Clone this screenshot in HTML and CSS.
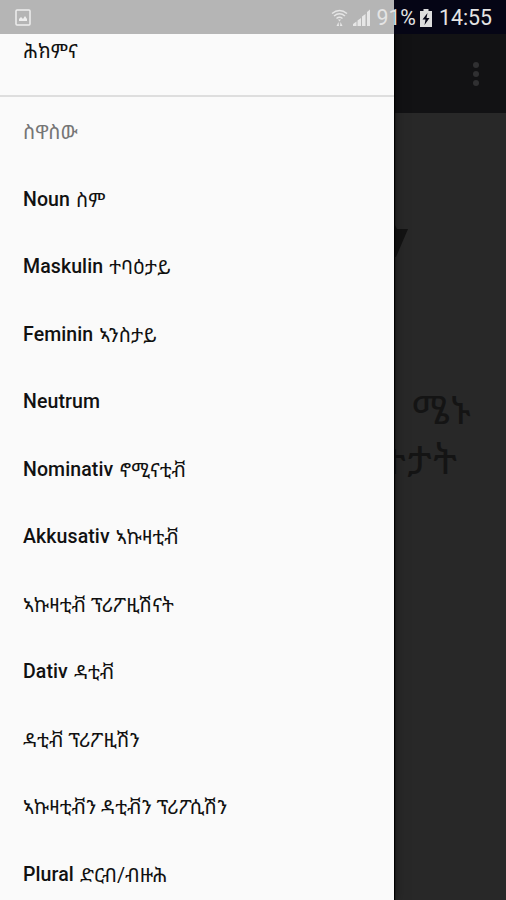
FILE: index.html
```html
<!DOCTYPE html>
<html lang="ti">
<head>
  <meta charset="UTF-8" />
  <title>ስዋስው</title>
  <link rel="stylesheet" href="styles.css">
</head>
<body>

  <!-- Main screen, dimmed behind the drawer -->
  <div class="screen">
    <header class="toolbar">
      <div class="overflow"><i></i><i></i><i></i></div>
    </header>
    <main class="content">
      <svg class="arrow" width="14" height="38" viewBox="0 0 14 38"><path d="M0 2L3 8H14L2 36H0z" fill="#131313"/></svg>
      <p class="hint first">ሜኑ</p>
      <p class="hint second">ትታት</p>
    </main>
  </div>

  <!-- Navigation drawer -->
  <nav class="drawer">
    <div class="item cut"><b>ሕክምና</b></div>
    <div class="section"><b>ስዋስው</b></div>
    <div class="item">Noun <b>ስም</b></div>
    <div class="item">Maskulin <b>ተባዕታይ</b></div>
    <div class="item">Feminin <b>ኣንስታይ</b></div>
    <div class="item">Neutrum</div>
    <div class="item">Nominativ <b>ኖሚናቲቭ</b></div>
    <div class="item">Akkusativ <b>ኣኩዛቲቭ</b></div>
    <div class="item"><b>ኣኩዛቲቭ ፕሪፖዚሽናት</b></div>
    <div class="item">Dativ <b>ዳቲቭ</b></div>
    <div class="item"><b>ዳቲቭ ፕሪፖዚሽን</b></div>
    <div class="item"><b>ኣኩዛቲቭን ዳቲቭን ፕሪፖሲሽን</b></div>
    <div class="item">Plural <b>ድርብ/ብዙሕ</b></div>
  </nav>

  <!-- Status bar -->
  <div class="status">
    <svg class="picture" width="16" height="17" viewBox="0 0 16 17"><rect x="1" y="1" width="14" height="15" rx="1" fill="none" stroke="#eee" stroke-width="1.5"/><path d="M4 12V10L6 8L8 10L10 7L12 10V12z" fill="#eee"/></svg>
    <svg class="wifi" width="17" height="18" viewBox="0 0 17 18"><g fill="none" stroke="#e6e6e6" stroke-width="1.5"><path d="M1 4.5Q8.500-1.500 16 4.500"/><path d="M3 7Q8.500 2.500 14 7"/><path d="M5.500 9.500Q8.500 7 11.500 9.500"/></g><path d="M7 10.500H10L8.500 12.500zM7.500 13L5.500 17H8zM9.500 13L11.500 17H9z" fill="#e6e6e6"/></svg>
    <svg class="signal" width="18" height="18" viewBox="0 0 18 18"><path d="M0 17V15L3.500 12.500V17zM4.500 17V11.500L8 9V17zM9 17V7.500L12.500 5V17zM14 17V3L17 .5V17z" fill="#e6e6e6"/></svg>
    <span class="percent">91%</span>
    <svg class="battery" width="12" height="18" viewBox="0 0 12 18"><path d="M3.500 0H8.500V2H12V18H0V2H3.500z" fill="#ddd"/><path d="M7.500 4L2.500 10.500H5.500L4.500 16L9.500 9H6.500z" fill="#050515"/></svg>
    <span class="clock">14:55</span>
  </div>

</body>
</html>
```

FILE: styles.css
```css
body {
  margin: 0;
  height: 900px;
  position: relative;
  overflow: hidden;
  background: #282828;
  font-family: Roboto, "Noto Sans Ethiopic", "Noto Sans", sans-serif;
}

.toolbar {
  height: 113px;
  box-sizing: border-box;
  padding: 62px 27px 0 0;
  background: #121214;
  display: flex;
  justify-content: flex-end;
}

.overflow {
  display: flex;
  flex-direction: column;
  gap: 3px;
}

.overflow i {
  width: 6px;
  height: 6px;
  border-radius: 50%;
  background: #303032;
}

.content {
  display: flex;
  flex-direction: column;
  padding: 108px 0 0 394px;
}

.hint {
  margin: 0;
  height: 50px;
  line-height: 50px;
  font-size: 39.5px;
  letter-spacing: 1.5px;
  color: #141414;
  white-space: nowrap;
}

.first {
  margin-top: 127px;
  padding-left: 18px;
}

.second {
  margin-left: -12px;
}

.drawer {
  position: absolute;
  top: 0;
  left: 0;
  width: 394px;
  height: 900px;
  overflow: hidden;
  background: #fafafa;
  box-shadow: 1px 0 1px #000, 0 0 12px rgba(0, 0, 0, 0.5);
}

.drawer b {
  font-weight: 400;
  font-size: 19.7px;
  letter-spacing: 0;
}

.item,
.section {
  height: 67.5px;
  box-sizing: border-box;
  padding: 1.5px 0 0 23px;
  display: flex;
  align-items: center;
  gap: 6px;
  font-size: 19.5px;
  font-weight: 500;
  letter-spacing: 0.1px;
  color: #111;
  white-space: nowrap;
}

.cut {
  height: 97px;
  padding-top: 6px;
  border-bottom: 2px solid #dedede;
}

.section {
  color: #757575;
}

.status {
  position: absolute;
  top: 0;
  left: 0;
  width: 506px;
  height: 34px;
  box-sizing: border-box;
  padding: 1px 14px 0 15px;
  display: flex;
  align-items: center;
  background: linear-gradient(90deg, #b5b5b5 394px, #050515 394px);
  color: #e4e4e4;
  font-size: 21.3px;
}

.wifi {
  margin-left: auto;
}

.signal {
  margin-left: 5px;
}

.percent {
  margin-left: 5px;
}

.battery {
  margin: 0 7px 0 4px;
}
```
